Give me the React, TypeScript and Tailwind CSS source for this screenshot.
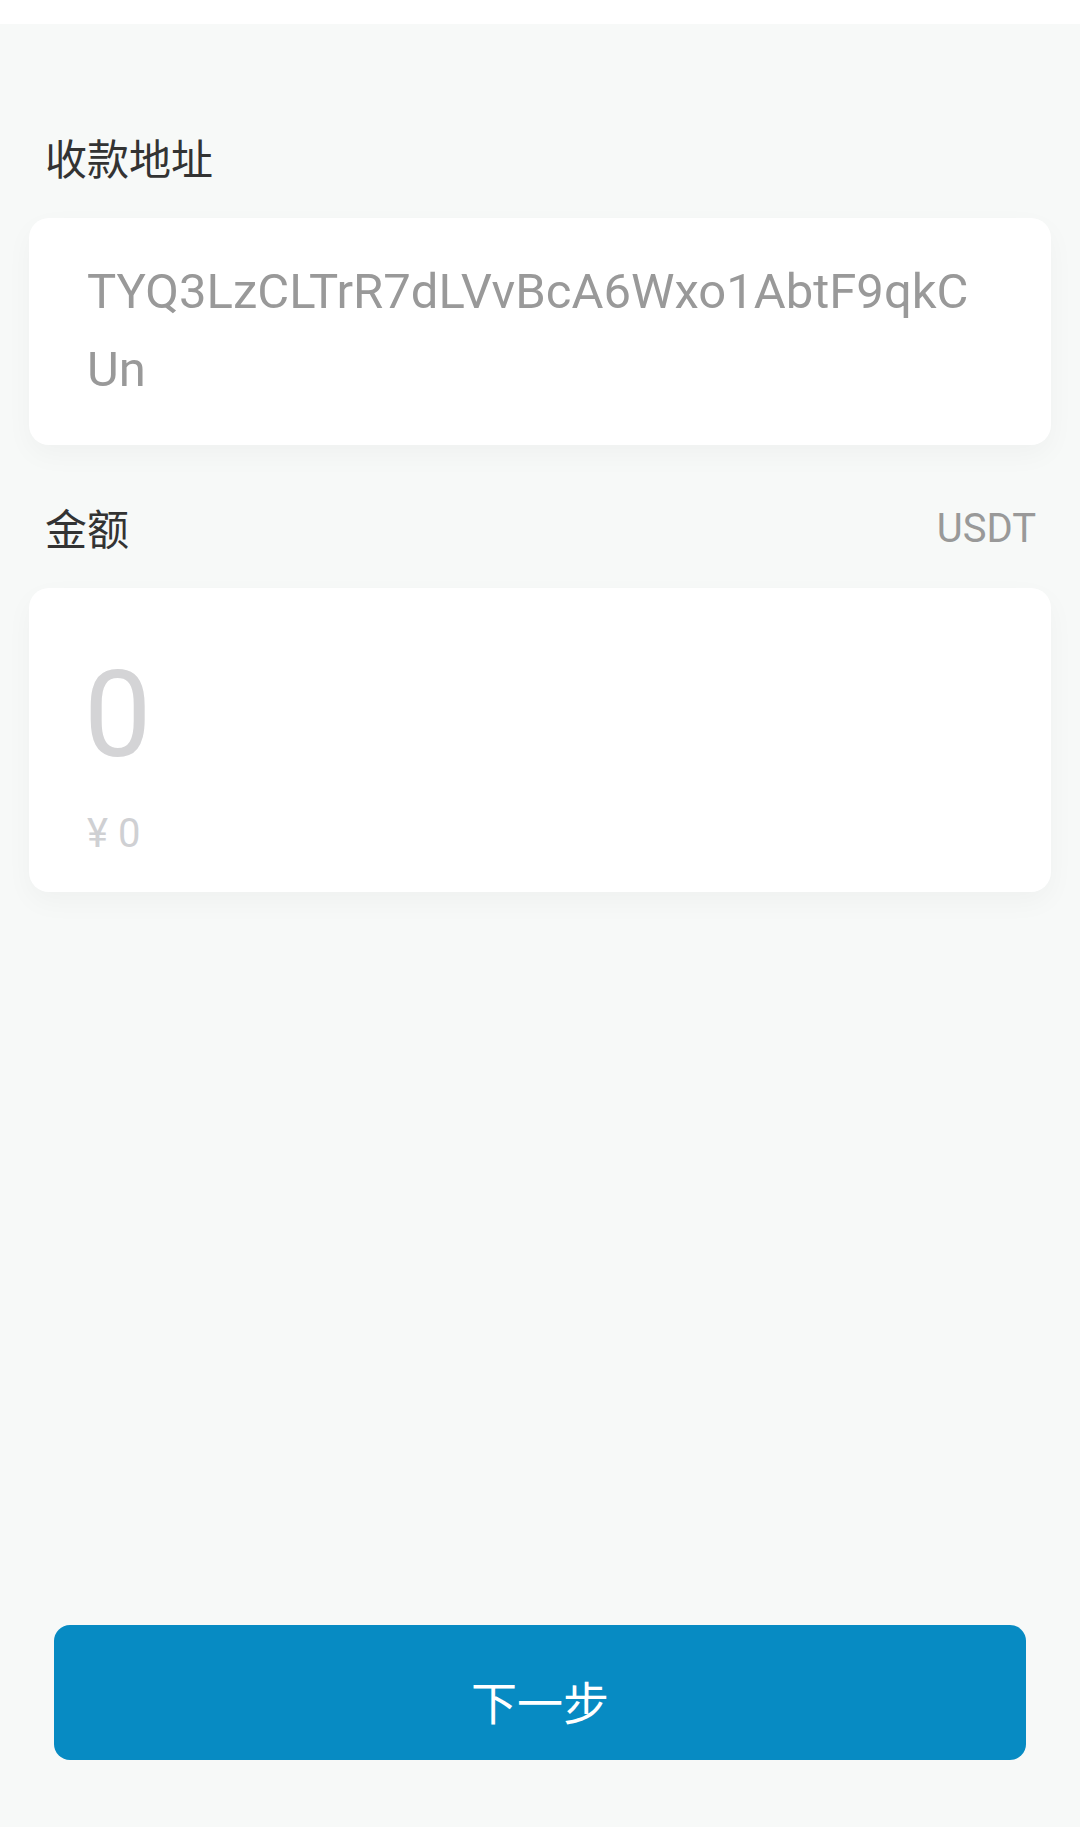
// Transfer form: address + amount + next step
const ADDRESS = "TYQ3LzCLTrR7dLVvBcA6Wxo1AbtF9qkCUn";

export default function App() {
  return (
    <div className="min-h-[1827px] w-full bg-[#f7f9f8] flex flex-col">
      {/* top strip */}
      <div className="h-[24px] bg-white" />

      {/* Address */}
      <div className="mt-[112px] pl-[45px] text-[42px] leading-none text-[#333333] font-['Noto_Sans_CJK_SC','Noto_Sans',sans-serif]">
        收款地址
      </div>
      <div className="mt-[40px] mx-[29px] bg-white rounded-[20px] shadow-[0_10px_28px_rgba(20,30,40,0.035)] pl-[58px] pr-[66px] pt-[35px] pb-[36px]">
        <p className="text-[49px] leading-[78px] text-[#999999] break-all font-['Roboto','Noto_Sans',sans-serif]">
          {ADDRESS}
        </p>
      </div>

      {/* Amount */}
      <div className="mt-[61px] pl-[45px] pr-[44px] flex justify-between items-start">
        <span className="text-[42px] leading-none text-[#333333] font-['Noto_Sans_CJK_SC','Noto_Sans',sans-serif]">
          金额
        </span>
        <span className="mt-[3px] text-[40px] leading-none text-[#999999] font-['Roboto','Noto_Sans',sans-serif]">
          USDT
        </span>
      </div>
      <div className="mt-[39px] mx-[29px] bg-white rounded-[20px] shadow-[0_10px_28px_rgba(20,30,40,0.035)] pl-[55px] pr-[58px] pt-[67px] pb-[38px] font-['Roboto','Noto_Sans',sans-serif]">
        <div className="text-[120px] leading-none text-[#d4d4d6]">0</div>
        <div className="mt-[39px] ml-[3px] text-[40px] leading-none text-[#cfd0d3]">¥ 0</div>
      </div>

      <div className="flex-1" />

      {/* Next button */}
      <button className="mx-[54px] mb-[67px] h-[135px] rounded-[16px] bg-[#078bc3] text-white text-[46px] leading-none flex items-center justify-center pt-[15px] font-['Noto_Sans_CJK_SC','Noto_Sans',sans-serif]">
        下一步
      </button>
    </div>
  );
}
